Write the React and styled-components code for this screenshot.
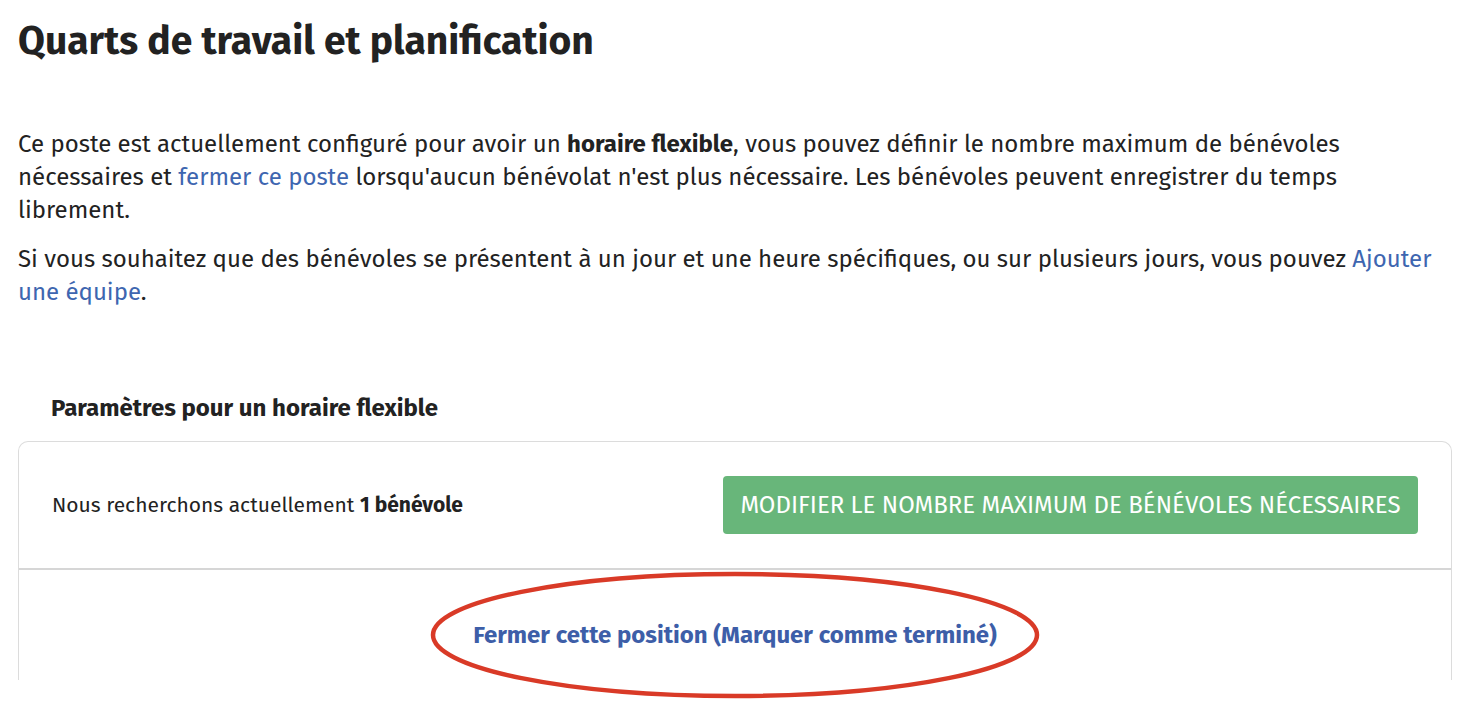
import React from "react";
import styled, { createGlobalStyle } from "styled-components";

const GlobalStyle = createGlobalStyle`
    body {
        margin: 0;
        background: #ffffff;
        font-family: "Fira Sans", Roboto, "Noto Sans", sans-serif;
        color: #222222;
    }
`;

const App = () => {
    return (
        <Page>
            <GlobalStyle />
            <Title>Quarts de travail et planification</Title>
            <Intro>
                <Paragraph>
                    Ce poste est actuellement configuré pour avoir un{" "}
                    <strong>horaire flexible</strong>, vous pouvez définir le
                    nombre maximum de bénévoles
                    <br />
                    nécessaires et <Link href="#">fermer ce poste</Link>{" "}
                    lorsqu'aucun bénévolat n'est plus nécessaire. Les bénévoles
                    peuvent enregistrer du temps
                    <br />
                    librement.
                </Paragraph>
                <Paragraph>
                    Si vous souhaitez que des bénévoles se présentent à un jour
                    et une heure spécifiques, ou sur plusieurs jours, vous pouvez{" "}
                    <Link href="#">Ajouter</Link>
                    <br />
                    <Link href="#">une équipe</Link>.
                </Paragraph>
            </Intro>
            <SectionLabel>Paramètres pour un horaire flexible</SectionLabel>
            <Card>
                <Row>
                    <RowText>
                        Nous recherchons actuellement <strong>1 bénévole</strong>
                    </RowText>
                    <GreenButton>
                        Modifier le nombre maximum de bénévoles nécessaires
                    </GreenButton>
                </Row>
                <CloseRow>
                    <CloseLink href="#">
                        Fermer cette position (Marquer comme terminé)
                    </CloseLink>
                    <Highlight viewBox="0 0 612 130" aria-hidden="true">
                        <ellipse
                            cx="306"
                            cy="65"
                            rx="302"
                            ry="61"
                            fill="none"
                            stroke="#d93a27"
                            strokeWidth="4.5"
                        />
                    </Highlight>
                </CloseRow>
            </Card>
        </Page>
    );
};

export default App;

const Page = styled.div`
    padding: 0 18px 24px;
    box-sizing: border-box;
`;

const Title = styled.h1`
    margin: 0;
    padding-top: 16px;
    font-size: 39px;
    line-height: 50px;
    font-weight: 700;
    color: #222222;
`;

const Intro = styled.div`
    padding-top: 62px;
`;

const Paragraph = styled.p`
    margin: 0 0 16px;
    font-size: 24px;
    line-height: 33px;
    color: #222222;

    strong {
        font-weight: 700;
    }
`;

const Link = styled.a`
    color: #3e66b0;
    text-decoration: none;
`;

const SectionLabel = styled.h3`
    margin: 84px 0 0;
    padding-left: 33px;
    font-size: 24px;
    line-height: 30px;
    font-weight: 700;
    color: #222222;
`;

/* the card runs on past the bottom of the capture, so no bottom edge */
const Card = styled.div`
    margin-top: 18px;
    border: 1px solid #dcdcdc;
    border-bottom: none;
    border-radius: 10px 10px 0 0;
    height: 238px;
`;

const Row = styled.div`
    display: flex;
    align-items: center;
    justify-content: space-between;
    height: 126px;
    padding: 0 33px;
    border-bottom: 2px solid #d6d6d6;
`;

const RowText = styled.div`
    font-size: 21px;
    color: #222222;

    strong {
        font-weight: 700;
    }
`;

const GreenButton = styled.button`
    height: 58px;
    width: 695px;
    border: none;
    border-radius: 4px;
    background: #68b67a;
    color: #ffffff;
    font-family: inherit;
    font-size: 24px;
    text-transform: uppercase;
    cursor: pointer;
`;

const CloseRow = styled.div`
    position: relative;
    display: flex;
    justify-content: center;
    padding-top: 50px;
`;

const CloseLink = styled.a`
    font-size: 24px;
    line-height: 30px;
    font-weight: 700;
    color: #3d5ea8;
    text-decoration: none;
`;

const Highlight = styled.svg`
    position: absolute;
    left: 50%;
    top: 0;
    width: 612px;
    height: 130px;
    margin-left: -306px;
    pointer-events: none;
    overflow: visible;
`;
